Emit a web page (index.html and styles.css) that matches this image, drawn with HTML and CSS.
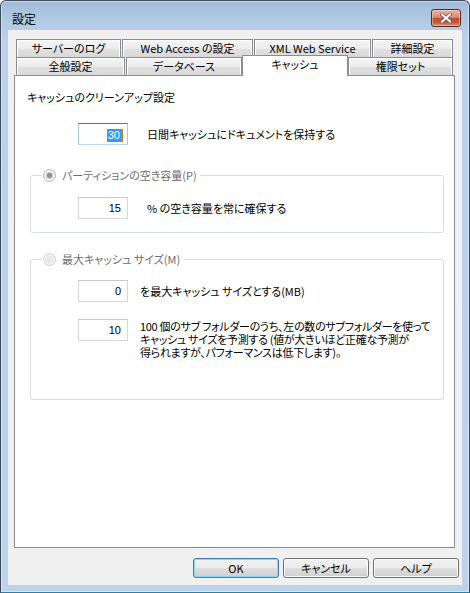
FILE: index.html
```html
<!DOCTYPE html>
<html lang="ja">
<head>
<meta charset="utf-8">
<title>設定</title>
<link rel="stylesheet" href="styles.css">
</head>
<body>
<div class="window">
  <div class="titlebar">
    <span class="title">設定</span>
    <div class="close">
      <svg width="12" height="10" viewBox="0 0 12 10">
        <path d="M2 1.5 L10 8.5 M10 1.5 L2 8.5" stroke="#5a5a5a" stroke-width="3.6" stroke-linecap="square" fill="none"/>
        <path d="M2 1.5 L10 8.5 M10 1.5 L2 8.5" stroke="#ffffff" stroke-width="2" stroke-linecap="square" fill="none"/>
      </svg>
    </div>
  </div>
  <div class="client">
    <div class="tabs">
      <div class="tabrow">
        <div class="tab t11">サーバーのログ</div>
        <div class="tab t12">Web Access の設定</div>
        <div class="tab t13">XML Web Service</div>
        <div class="tab t14">詳細設定</div>
      </div>
      <div class="tabrow">
        <div class="tab t21">全般設定</div>
        <div class="tab t22">データベース</div>
        <div class="tab selected">キャッシュ</div>
        <div class="tab t24">権限セット</div>
      </div>
    </div>
    <div class="panel">
      <div class="heading">キャッシュのクリーンアップ設定</div>
      <div class="row first">
        <div class="textbox focused"><span class="sel">30</span></div>
        <span class="label wide">日間キャッシュにドキュメントを保持する</span>
      </div>
      <div class="group g1">
        <div class="legend">
          <svg class="radio" width="13" height="13" viewBox="0 0 13 13">
            <circle cx="6.5" cy="6.5" r="6" fill="#f4f4f4" stroke="#b4b4b4"/>
            <circle cx="6.5" cy="6.5" r="3.6" fill="#c4c4c4"/>
            <circle cx="6.5" cy="6.5" r="2.4" fill="#8e8e8e"/>
          </svg>
          <span class="disabled">パーティションの空き容量(P)</span>
        </div>
        <div class="row grow">
          <div class="textbox">15</div>
          <span class="label wide">% の空き容量を常に確保する</span>
        </div>
      </div>
      <div class="group g2">
        <div class="legend">
          <svg class="radio" width="13" height="13" viewBox="0 0 13 13">
            <circle cx="6.5" cy="6.5" r="6" fill="#f2f2f2" stroke="#cfcfcf"/>
            <circle cx="6.5" cy="6.5" r="4" fill="#e9e9e9"/>
          </svg>
          <span class="disabled">最大キャッシュ サイズ(M)</span>
        </div>
        <div class="row grow">
          <div class="textbox">0</div>
          <span class="label">を最大キャッシュ サイズとする(MB)</span>
        </div>
        <div class="row top second">
          <div class="textbox">10</div>
          <p class="label para">100 個のサブ フォルダーのうち、左の数のサブフォルダーを使って<br>キャッシュ サイズを予測する (値が大きいほど正確な予測が<br>得られますが、パフォーマンスは低下します)。</p>
        </div>
      </div>
    </div>
    <div class="buttons">
      <div class="btn default">OK</div>
      <div class="btn">キャンセル</div>
      <div class="btn">ヘルプ</div>
    </div>
  </div>
</div>
</body>
</html>
```

FILE: styles.css
```css
* { box-sizing: border-box; }

html, body {
  margin: 0;
  padding: 0;
  background: #ffffff;
}

body {
  font-family: "Noto Sans CJK JP", "Liberation Sans", sans-serif;
  font-size: 11px;
  font-feature-settings: "palt";
  color: #000;
}

.window {
  width: 470px;
  height: 593px;
  border: 1px solid #3a4a5c;
  border-bottom-color: #2e7fa6;
  border-radius: 6px 6px 0 0;
  background: linear-gradient(#a2bcd9 0px, #b3cbe5 22px, #bad1ea 40px, #bcd3ea 100%);
  box-shadow: inset 0 0 0 1px rgba(255, 255, 255, 0.45);
  padding: 0 7px 7px 7px;
  display: flex;
  flex-direction: column;
}

.titlebar {
  height: 29px;
  display: flex;
  align-items: flex-start;
  justify-content: space-between;
}

.title {
  font-size: 12px;
  line-height: 16px;
  padding: 10px 0 0 4px;
  color: #000;
}

.close {
  width: 30px;
  height: 18px;
  margin: 8px 1px 0 0;
  border: 1px solid #5a2a20;
  border-radius: 3px;
  background: linear-gradient(#eab1a3 0%, #dc8c78 45%, #c54b30 52%, #c8563a 78%, #e29575 100%);
  box-shadow: inset 0 0 0 1px rgba(255, 230, 220, 0.45);
  display: flex;
  align-items: center;
  justify-content: center;
}

.client {
  flex: 1;
  background: #f0f0f0;
  padding: 9px 3px 0 6px;
  display: flex;
  flex-direction: column;
}

.tabs {
  margin-left: 2px;
}

.tabrow {
  display: flex;
  align-items: flex-start;
  height: 18px;
}

.tab {
  height: 18px;
  border: 1px solid #898c95;
  border-bottom: none;
  background: linear-gradient(#f4f4f4 0%, #ececec 50%, #e0e0e0 51%, #d9d9d9 100%);
  box-shadow: inset 1px 1px 0 #ffffff, inset -1px 0 0 #ffffff;
  text-align: center;
  line-height: 16px;
  white-space: nowrap;
  margin-left: 1px;
}

.t11 { width: 105px; margin-left: 0; }
.t12 { width: 131px; }
.t13 { width: 117px; }
.t14 { width: 81px; }
.t21 { width: 109px; margin-left: 0; }
.t22 { width: 116px; }
.t24 { width: 105px; margin-left: 0; }

.tab.selected {
  position: relative;
  z-index: 1;
  width: 106px;
  height: 21px;
  margin: -2px 0 -1px 0;
  background: #ffffff;
  box-shadow: none;
  line-height: 17px;
  margin-left: 0;
}

.panel {
  width: 441px;
  height: 473px;
  border: 1px solid #898c95;
  background: #ffffff;
  padding-top: 13px;
}

.heading {
  margin-left: 12px;
  line-height: 16px;
}

.row {
  display: flex;
  align-items: center;
}

.row.first {
  margin: 18px 0 0 63px;
}

.row.grow {
  margin: 14px 0 0 47px;
}

.g2 .row.grow {
  margin-top: 13px;
}

.row.second {
  margin: 17px 0 0 47px;
  align-items: flex-start;
}

.textbox {
  width: 50px;
  height: 22px;
  border: 1px solid #d3d6db;
  border-top-color: #c4c7cc;
  text-align: right;
  padding-right: 6px;
  line-height: 20px;
  font-family: "Liberation Sans", "Noto Sans CJK JP", sans-serif;
  font-size: 11px;
}

.textbox.focused {
  border-color: #a4c9e3;
  border-top-color: #3d7bad;
  border-bottom-color: #b7d9ed;
  padding-right: 4px;
}

.sel {
  display: inline-block;
  background: #3399ff;
  color: #ffffff;
  line-height: 13px;
  padding: 0 1px;
  border-right: 2px solid #d07c1c;
  vertical-align: middle;
}

.label {
  margin-left: 12px;
  line-height: 16px;
  white-space: nowrap;
}

.label.wide {
  margin-left: 19px;
}

.para {
  margin: 0 0 0 12px;
  padding-top: 1px;
  line-height: 13px;
  letter-spacing: -0.3px;
}

.group {
  border: 1px solid #d5dfe5;
  border-radius: 3px;
  margin: 0 10px 0 15px;
}

.g1 {
  margin-top: 30px;
  padding-bottom: 13px;
}

.g2 {
  margin-top: 26px;
  padding-bottom: 40px;
}

.legend {
  display: flex;
  align-items: center;
  width: max-content;
  height: 16px;
  margin: -9px 0 0 11px;
  padding: 0 3px 0 1px;
  background: #ffffff;
  gap: 6px;
  line-height: 16px;
}

.radio {
  display: block;
  flex: none;
}

.disabled {
  color: #6d6d6d;
}

.buttons {
  display: flex;
  justify-content: flex-end;
  gap: 4px;
  margin-top: 10px;
}

.btn {
  width: 86px;
  height: 20px;
  border: 1px solid #707070;
  border-radius: 3px;
  background: linear-gradient(#f2f2f2 0%, #ebebeb 50%, #dddddd 51%, #cfcfcf 100%);
  box-shadow: inset 0 0 0 1px #fbfbfb;
  text-align: center;
  line-height: 18px;
}

.btn.default {
  border-color: #3c7fb1;
  box-shadow: inset 0 0 0 1px #8fd6f3;
}
```
